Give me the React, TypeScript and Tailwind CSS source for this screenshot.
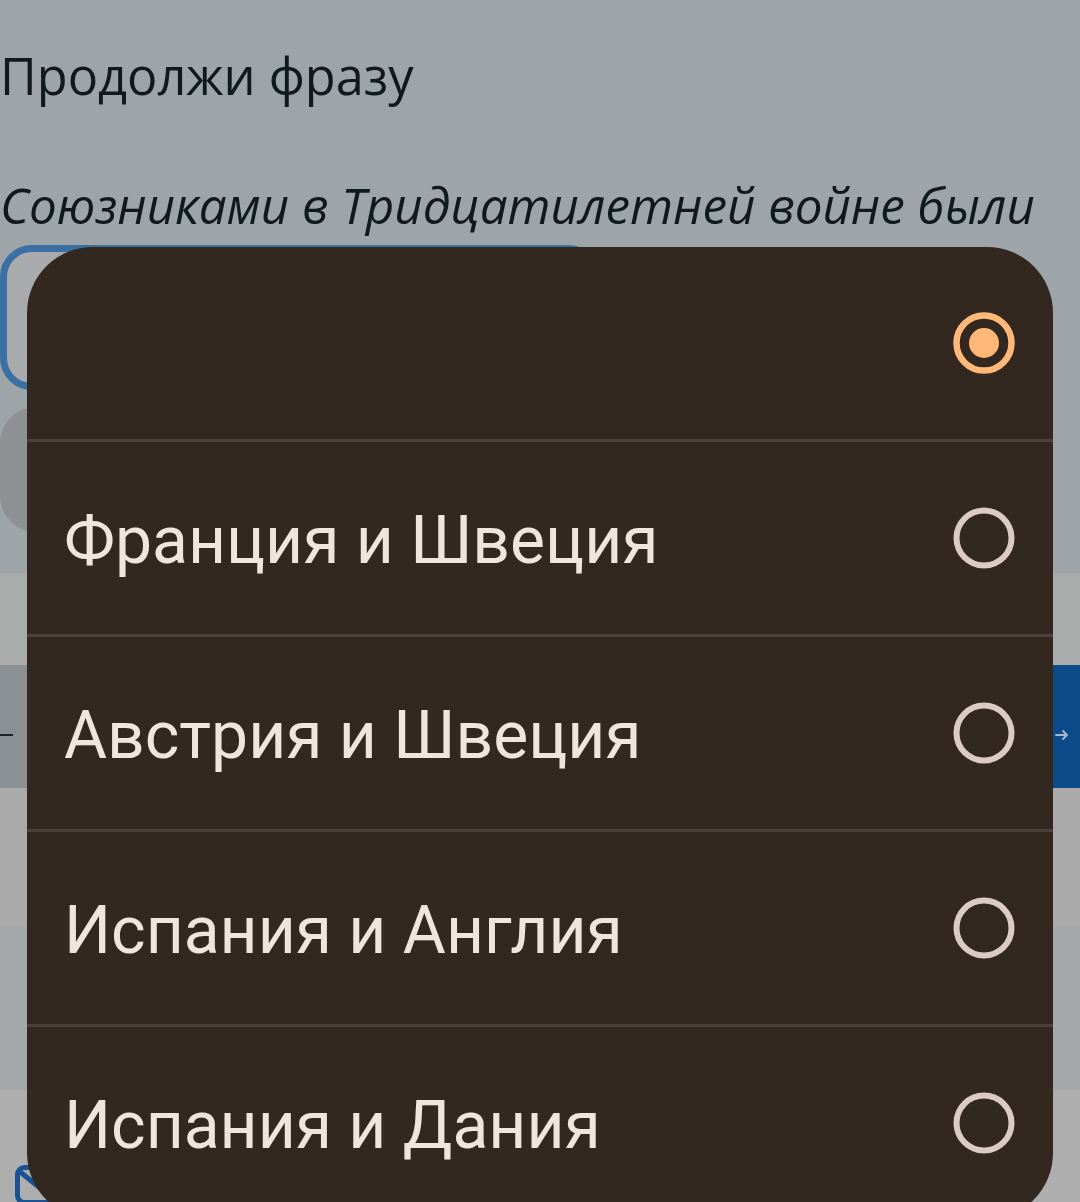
import React from "react";

const options = ["", "Франция и Швеция", "Австрия и Швеция", "Испания и Англия", "Испания и Дания"];

function Radio({ selected }: { selected: boolean }) {
  return (
    <svg width="62" height="62" viewBox="0 0 62 62">
      {selected ? (
        <>
          <circle cx="31" cy="31" r="27.5" fill="none" stroke="#ffb878" strokeWidth="6.5" />
          <circle cx="31" cy="31" r="15" fill="#ffb878" />
        </>
      ) : (
        <circle cx="31" cy="31" r="27.5" fill="none" stroke="#dccbc2" strokeWidth="6" />
      )}
    </svg>
  );
}

export default function App() {
  return (
    <div className="relative w-[1080px] h-[1202px] overflow-hidden bg-[#9ea5a8]" style={{ fontFamily: "'Open Sans', 'Noto Sans', sans-serif" }}>
      {/* dimmed page underneath */}
      <div className="flex flex-col">
        <div className="pt-[46px] text-[50.5px] leading-[60px] text-[#0f1a1c]">Продолжи фразу</div>
        <div className="mt-[69px] text-[49.3px] leading-[60px] italic text-[#0f1a1c] whitespace-nowrap">
          Союзниками в Тридцатилетней войне были
        </div>
        <div className="mt-[10px] h-[145px] w-[600px] rounded-[32px] border-[7px] border-[#3a70a3] bg-[#a8aaab]" />
        <div className="mt-[17px] h-[125px] w-[600px] rounded-[36px] bg-[#8d9194]" />
        <div className="h-[41px]" />
        <div className="h-[92px] bg-[#aaabab]" />
        <div className="flex h-[123px]">
          <div className="flex flex-1 items-center bg-[#8b9095] pt-[16px]">
            <div className="h-[2px] w-[13px] bg-[#1d2226]" />
          </div>
          <div className="flex flex-1 items-center justify-end bg-[#0d4a8a] pr-[11px] pt-[16px]">
            <svg width="14" height="12" viewBox="0 0 14 12">
              <path d="M1 6h11M8 2l4 4-4 4" fill="none" stroke="#a9b9cc" strokeWidth="1.8" strokeLinecap="round" strokeLinejoin="round" />
            </svg>
          </div>
        </div>
        <div className="h-[139px] bg-[#aaaaaa]" />
        <div className="h-[163px] bg-[#a6a7a8]" />
        <div className="h-[112px] bg-[#aeaeae] pl-[15px] pt-[75px]">
          <svg width="50" height="40" viewBox="0 0 50 40">
            <rect x="2.5" y="2.5" width="45" height="35" rx="7" fill="none" stroke="#1b5293" strokeWidth="5" />
            <path d="M4 6l21 17 21-17" fill="none" stroke="#1b5293" strokeWidth="5" strokeLinejoin="round" />
          </svg>
        </div>
      </div>

      {/* dropdown overlay */}
      <div
        className="absolute left-[27px] top-[247px] w-[1026px] overflow-hidden rounded-[66px] bg-[#332820]"
        style={{ fontFamily: "Roboto, 'Noto Sans', sans-serif" }}
      >
        {options.map((o, i) => (
          <div key={i}>
            {i > 0 && <div className="h-[3px] bg-[#4a413a]" />}
            <div className="flex h-[192px] items-center justify-between pl-[37px] pr-[38px]">
              <span className="pt-[5px] text-[66px] leading-none text-[#efe4de]">{o}</span>
              <Radio selected={i === 0} />
            </div>
          </div>
        ))}
      </div>
    </div>
  );
}
